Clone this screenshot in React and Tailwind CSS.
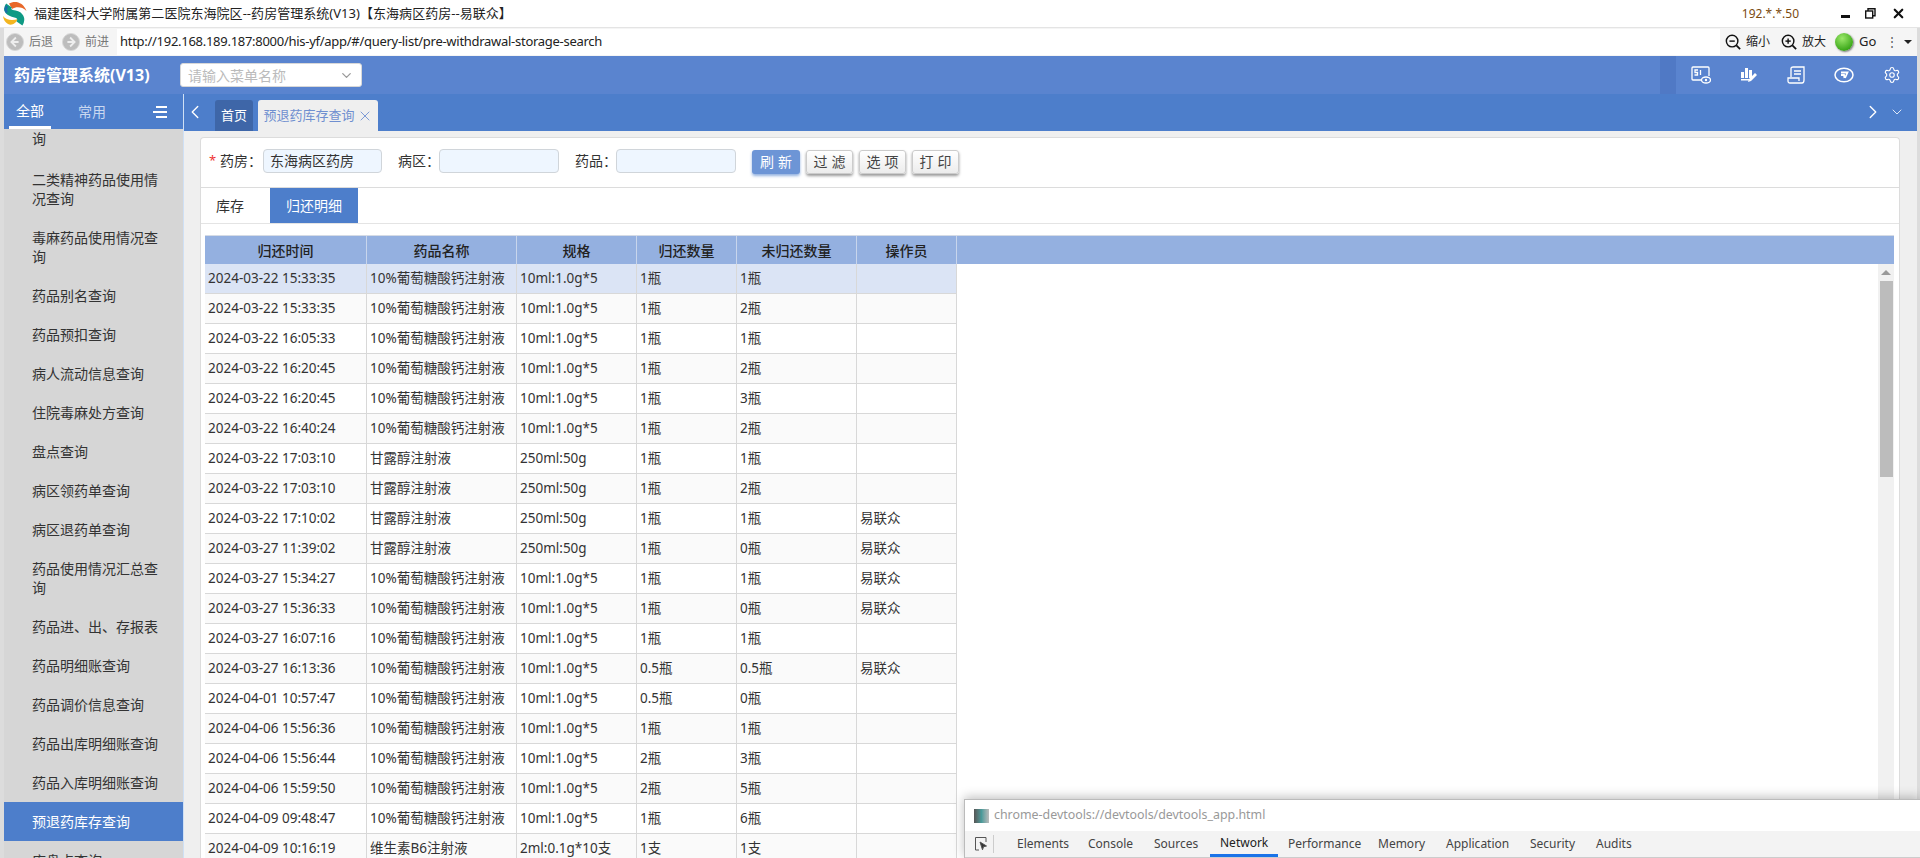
import React from 'react'
import { ChevronDown, ChevronLeft, ChevronRight, X, Settings } from 'lucide-react'

const menu = [
  { lines: ['询'], partial: true },
  { lines: ['二类精神药品使用情', '况查询'] },
  { lines: ['毒麻药品使用情况查', '询'] },
  { lines: ['药品别名查询'] },
  { lines: ['药品预扣查询'] },
  { lines: ['病人流动信息查询'] },
  { lines: ['住院毒麻处方查询'] },
  { lines: ['盘点查询'] },
  { lines: ['病区领药单查询'] },
  { lines: ['病区退药单查询'] },
  { lines: ['药品使用情况汇总查', '询'] },
  { lines: ['药品进、出、存报表'] },
  { lines: ['药品明细账查询'] },
  { lines: ['药品调价信息查询'] },
  { lines: ['药品出库明细账查询'] },
  { lines: ['药品入库明细账查询'] },
  { lines: ['预退药库存查询'], active: true },
  { lines: ['库盘点查询'] },
]

const G = '10%葡萄糖酸钙注射液'
const S = '10ml:1.0g*5'
const M = '甘露醇注射液'
const MS = '250ml:50g'

const rows = [
  ['2024-03-22 15:33:35', G, S, '1瓶', '1瓶', ''],
  ['2024-03-22 15:33:35', G, S, '1瓶', '2瓶', ''],
  ['2024-03-22 16:05:33', G, S, '1瓶', '1瓶', ''],
  ['2024-03-22 16:20:45', G, S, '1瓶', '2瓶', ''],
  ['2024-03-22 16:20:45', G, S, '1瓶', '3瓶', ''],
  ['2024-03-22 16:40:24', G, S, '1瓶', '2瓶', ''],
  ['2024-03-22 17:03:10', M, MS, '1瓶', '1瓶', ''],
  ['2024-03-22 17:03:10', M, MS, '1瓶', '2瓶', ''],
  ['2024-03-22 17:10:02', M, MS, '1瓶', '1瓶', '易联众'],
  ['2024-03-27 11:39:02', M, MS, '1瓶', '0瓶', '易联众'],
  ['2024-03-27 15:34:27', G, S, '1瓶', '1瓶', '易联众'],
  ['2024-03-27 15:36:33', G, S, '1瓶', '0瓶', '易联众'],
  ['2024-03-27 16:07:16', G, S, '1瓶', '1瓶', ''],
  ['2024-03-27 16:13:36', G, S, '0.5瓶', '0.5瓶', '易联众'],
  ['2024-04-01 10:57:47', G, S, '0.5瓶', '0瓶', ''],
  ['2024-04-06 15:56:36', G, S, '1瓶', '1瓶', ''],
  ['2024-04-06 15:56:44', G, S, '2瓶', '3瓶', ''],
  ['2024-04-06 15:59:50', G, S, '2瓶', '5瓶', ''],
  ['2024-04-09 09:48:47', G, S, '1瓶', '6瓶', ''],
  ['2024-04-09 10:16:19', '维生素B6注射液', '2ml:0.1g*10支', '1支', '1支', ''],
]

const heads = ['归还时间', '药品名称', '规格', '归还数量', '未归还数量', '操作员']
const colW = ['w-[162px]', 'w-[150px]', 'w-[120px]', 'w-[100px]', 'w-[120px]', 'w-[100px]']
const devTabs = [
  ['Elements', 'w-[71px]'],
  ['Console', 'w-[66px]'],
  ['Sources', 'w-[66px]'],
  ['Network', 'w-[68px]'],
  ['Performance', 'w-[90px]'],
  ['Memory', 'w-[68px]'],
  ['Application', 'w-[84px]'],
  ['Security', 'w-[66px]'],
  ['Audits', 'w-[60px]'],
]

const Logo = () => (
  <svg width="25" height="25" viewBox="0 0 25 25" fill="none">
    <path d="M7 2.500C12-.5 21 0 24.500 10 20 5.500 14 5.500 10 8z" fill="#e8682a" />
    <path d="M1 15c3 4.500 10 4.500 15 3-2 4-6 7-10 5C3 21.500 1.500 18.500 1 15z" fill="#f3b51f" />
    <path d="M7 4.500C3.500 9.500 7.500 12 13 13c5 1 7.500 5 4.500 9.500" stroke="#0f9a84" strokeWidth="7" />
    <path d="M5 5C3 8 3.500 10 5 11.500" stroke="#1a6fa8" strokeWidth="2.500" />
  </svg>
)

const NavCircle = ({ left }) => (
  <svg width="18" height="18" viewBox="0 0 20 20">
    <circle cx="10" cy="10" r="9.500" fill="#bdbdbd" stroke="#d8d8d8" />
    <path d={left ? 'M11 5 6 10l5 5M6 10h8' : 'M9 5l5 5-5 5M14 10H6'} fill="none" stroke="#eeeeee" strokeWidth="2" />
  </svg>
)

const Magnifier = ({ plus }) => (
  <svg width="16" height="16" viewBox="0 0 18 18" fill="none" stroke="#111" strokeWidth="1.6">
    <circle cx="8" cy="8" r="6.500" />
    <path d="M12.800 12.800 17 17" strokeWidth="2" />
    <path d="M5 8h6" />
    {plus && <path d="M8 5v6" />}
  </svg>
)

const Field = ({ label, value, star, labelW, inputW }) => (
  <div className="flex items-center">
    {star && <span className="w-[11px] text-[13px] text-[#e33]">*</span>}
    <span className={`${labelW} whitespace-nowrap text-[14px] text-[#333]`}>{label}：</span>
    <div className={`${inputW} flex h-[24px] items-center rounded-[4px] border border-[#d0d5da] bg-[#eef6ff] px-[6px] text-[14px] text-[#333]`}>
      {value}
    </div>
  </div>
)

const Btn = ({ children, primary }) => (
  <button
    className={
      primary
        ? 'h-[24px] w-[48px] rounded-[3px] bg-[#6d95d6] pl-[4px] text-[14px] tracking-[4px] text-white shadow-[0_2px_3px_rgba(77,126,203,0.6)]'
        : 'h-[24px] w-[47px] rounded-[3px] border border-[#ccc] bg-gradient-to-b from-white to-[#ececec] pl-[4px] text-[14px] tracking-[4px] text-[#444] shadow-[0_2px_3px_rgba(0,0,0,0.4)]'
    }
  >
    {children}
  </button>
)

export default function App() {
  return (
    <div className="relative flex h-[858px] w-[1920px] flex-col overflow-hidden bg-white font-['Noto_Sans','Noto_Sans_CJK_SC',sans-serif] text-[#333]">
      {/* window title */}
      <div className="flex h-[28px] shrink-0 items-center border-b border-[#e4e4e4] bg-white pl-[2px]">
        <Logo />
        <span className="ml-[7px] text-[13px] tracking-[0.04px] text-[#222]">福建医科大学附属第二医院东海院区--药房管理系统(V13)【东海病区药房--易联众】</span>
        <span className="ml-auto mr-[42px] text-[12px] text-[#7a4a10]">192.*.*.50</span>
        <div className="flex items-center gap-[15px] pr-[14px]">
          <span className="mt-[5px] h-[3px] w-[9px] bg-[#111]" />
          <svg width="11" height="11" viewBox="0 0 11 11" fill="none" stroke="#111" strokeWidth="1.4">
            <rect x="0.7" y="3" width="7" height="7" />
            <path d="M3 3V.8h7v7H8" />
          </svg>
          <X size={15} strokeWidth={3.5} className="text-[#111]" />
        </div>
      </div>

      {/* browser toolbar */}
      <div className="flex h-[28px] shrink-0 items-center border-x-[4px] border-r-[3px] border-[#dcdcdc] bg-[#f5f5f5] text-[12px]">
        <div className="flex w-[113px] items-center pl-[2px] text-[#777]">
          <NavCircle left />
          <span className="ml-[5px]">后退</span>
          <span className="ml-[9px] flex"><NavCircle /></span>
          <span className="ml-[5px]">前进</span>
        </div>
        <div className="flex h-[26px] w-[1603px] items-center bg-white pl-[3px] text-[13px] tracking-[-0.28px] text-[#222]">
          http://192.168.189.187:8000/his-yf/app/#/query-list/pre-withdrawal-storage-search
        </div>
        <div className="flex flex-1 items-center pl-[5px] text-[#222]">
          <Magnifier />
          <span className="ml-[5px]">缩小</span>
          <span className="ml-[11px] flex"><Magnifier plus /></span>
          <span className="ml-[5px]">放大</span>
          <span className="ml-[9px] h-[18px] w-[18px] rounded-full bg-[radial-gradient(circle_at_40%_30%,#9be86a,#3ea91c_70%,#2a7a10)] shadow-[1px_1px_2px_rgba(0,0,0,0.5)]" />
          <span className="ml-[6px] text-[13px]">Go</span>
          <span className="ml-[10px] text-[#555]">⋮</span>
          <span className="ml-[6px] h-0 w-0 border-x-[4px] border-t-[4px] border-x-transparent border-t-[#222]" />
        </div>
      </div>

      {/* app header */}
      <div className="flex h-[38px] shrink-0 items-center border-x-[4px] border-r-[3px] border-[#dcdcdc] bg-[#5a84cf]">
        <span className="ml-[10px] w-[166px] text-[16px] font-bold text-white">药房管理系统(V13)</span>
        <div className="flex h-[24px] w-[182px] items-center justify-between rounded-[3px] border border-[#d8d8d8] bg-white px-[7px] text-[14px] text-[#bbb]">
          请输入菜单名称
          <ChevronDown size={15} className="text-[#999]" />
        </div>
        <div className="ml-auto h-full w-[16px] bg-[#5079c5]" />
        <div className="flex h-full w-[241px] items-center gap-[29px] pl-[15px] text-white">
          <svg width="20" height="18" viewBox="0 0 20 18" fill="none" stroke="white" strokeWidth="1.3">
            <path d="M10 14H2a1 1 0 0 1-1-1V2a1 1 0 0 1 1-1h15a1 1 0 0 1 1 1v8" />
            <path d="M7 4H4v2.500h2.500V9H3.500M9.500 4v5" />
            <ellipse cx="15" cy="14" rx="4.500" ry="3" fill="#5a84cf" />
            <circle cx="15" cy="14" r="1.200" fill="white" stroke="none" />
          </svg>
          <svg width="18" height="18" viewBox="0 0 18 18" fill="white">
            <rect x="1" y="6" width="3" height="6" />
            <rect x="5" y="2" width="3" height="10" />
            <rect x="9" y="4" width="3" height="8" />
            <path d="M1 13h8v1.500H1zM15 7l2 2-6 6-3 1 1-3z" />
          </svg>
          <svg width="18" height="18" viewBox="0 0 18 18" fill="none" stroke="white" strokeWidth="1.3">
            <path d="M4 11V2.500C4 1.500 5 1 6 1h11v13c0 2-1 3-2 3H3c-1.500 0-2-1-2-2v-3h11v3" />
            <path d="M7 5h7M7 8h7" />
          </svg>
          <svg width="20" height="18" viewBox="0 0 20 18" fill="none" stroke="white" strokeWidth="1.5">
            <ellipse cx="10" cy="9" rx="9" ry="6.800" />
            <path d="M7 6.500h6.500L11 12M7 9h3l.5 3" strokeWidth="1.800" />
          </svg>
          <Settings size={18} strokeWidth={1.5} />
        </div>
      </div>

      <div className="flex min-h-0 flex-1 border-x-[4px] border-r-[3px] border-[#dcdcdc]">
        {/* sidebar */}
        <div className="flex w-[180px] shrink-0 flex-col border-r border-[#cfe0f5]">
          <div className="flex h-[35px] shrink-0 bg-[#4d7ecb] text-[14px] text-white">
            <div className="ml-[5px] flex h-full w-[42px] items-center justify-center border-b-[3px] border-white">全部</div>
            <div className="ml-[27px] flex items-center text-[#c9d8f0]">常用</div>
            <div className="ml-[47px] flex flex-col justify-center gap-[3px]">
              <span className="ml-[3px] h-[2px] w-[11px] bg-white" />
              <span className="h-[2px] w-[14px] bg-white" />
              <span className="ml-[3px] h-[2px] w-[11px] bg-white" />
            </div>
          </div>
          <div className="flex-1 overflow-hidden bg-[#d6d6d6] text-[14px] leading-[19px] text-[#333]">
            {menu.map((m, i) => (
              <div
                key={i}
                className={
                  m.partial
                    ? 'flex h-[31px] items-start pl-[28px]'
                    : m.active
                      ? 'flex h-[39px] flex-col justify-center bg-[#4d7ecb] pl-[28px] text-white'
                      : 'flex flex-col justify-center py-[10px] pl-[28px]'
                }
              >
                {m.lines.map((l) => (
                  <div key={l}>{l}</div>
                ))}
              </div>
            ))}
          </div>
        </div>

        {/* main */}
        <div className="flex min-w-0 flex-1 flex-col bg-[#efefef]">
          <div className="flex h-[37px] shrink-0 items-end bg-[#4d7ecb]">
            <ChevronLeft size={22} strokeWidth={1.5} className="mb-[8px] text-white" />
            <div className="ml-[9px] flex h-[31px] w-[38px] items-center justify-center rounded-t-[3px] bg-[#3e66a8] text-[13px] text-white">首页</div>
            <div className="ml-[5px] flex h-[31px] w-[120px] items-center justify-center gap-[2px] rounded-t-[3px] bg-[#efefef] text-[13px] text-[#6f8fd0]">
              预退药库存查询
              <X size={16} strokeWidth={1.5} className="text-[#7e9bd6]" />
            </div>
            <ChevronRight size={22} strokeWidth={1.5} className="mb-[8px] ml-auto text-white" />
            <ChevronDown size={16} strokeWidth={1.5} className="mb-[11px] ml-[5px] mr-[12px] text-[#dfe8f7]" />
          </div>

          <div className="ml-[16px] mr-[17px] mt-[6px] flex min-h-0 flex-1 flex-col rounded-t-[4px] border-x border-t border-[#dcdcdc] bg-white">
            {/* filters */}
            <div className="flex h-[50px] shrink-0 items-center border-b border-[#dcdcdc] pb-[4px] pl-[8px]">
              <Field star label="药房" value="东海病区药房" labelW="w-[43px]" inputW="w-[119px]" />
              <div className="ml-[16px]"><Field label="病区" labelW="w-[41px]" inputW="w-[120px]" /></div>
              <div className="ml-[16px]"><Field label="药品" labelW="w-[41px]" inputW="w-[120px]" /></div>
              <div className="ml-[16px] mt-[2px] flex gap-[6px]">
                <Btn primary>刷新</Btn>
                <Btn>过滤</Btn>
                <Btn>选项</Btn>
                <Btn>打印</Btn>
              </div>
            </div>

            {/* tabs */}
            <div className="flex h-[36px] shrink-0 border-b border-[#e4e4e4] text-[14px]">
              <div className="flex w-[69px] items-center pl-[15px] text-[#333]">库存</div>
              <div className="flex w-[88px] items-center justify-center bg-[#4d7ecb] text-white">归还明细</div>
            </div>

            {/* table */}
            <div className="ml-[4px] mr-[5px] mt-[11px] flex min-h-0 flex-1 flex-col">
              <div className="flex h-[29px] shrink-0 border-t border-[#d5dbe5] bg-[#94b0e0] text-[14px] font-medium text-[#222]">
                {heads.map((h, i) => (
                  <div key={h} className={`${colW[i]} flex items-center justify-center border-r border-[#c8d5ec]`}>{h}</div>
                ))}
              </div>
              <div className="flex min-h-0 flex-1">
                <div className="w-[752px] shrink-0">
                  {rows.map((r, i) => (
                    <div
                      key={i}
                      className={
                        i === 0
                          ? 'flex h-[30px] border-b border-[#d8d8d8] bg-[#dbe4f5]'
                          : i % 2
                            ? 'flex h-[30px] border-b border-[#d8d8d8] bg-[#fafafa]'
                            : 'flex h-[30px] border-b border-[#d8d8d8] bg-white'
                      }
                    >
                      {r.map((c, j) => (
                        <div
                          key={j}
                          className={`${colW[j]} flex items-center overflow-hidden whitespace-nowrap border-r border-[#d8d8d8] pl-[3px] text-[13.5px] text-[#333]`}
                        >
                          {c}
                        </div>
                      ))}
                    </div>
                  ))}
                </div>
                <div className="ml-auto flex w-[16px] flex-col items-center bg-[#f1f1f1] pt-[6px]">
                  <span className="h-0 w-0 border-x-[5px] border-b-[5px] border-x-transparent border-b-[#999]" />
                  <span className="mt-[6px] h-[196px] w-[13px] bg-[#bcbcbc]" />
                </div>
              </div>
            </div>
          </div>
        </div>
      </div>

      {/* devtools window floating over the page */}
      <div className="absolute bottom-0 left-[964px] right-0 h-[59px] border-l border-t border-[#bbb] bg-white shadow-[0_-2px_10px_rgba(0,0,0,0.25)]">
        <div className="flex h-[31px] items-center pl-[9px] text-[12.4px] text-[#999]">
          <span className="mr-[5px] h-[14px] w-[15px] bg-gradient-to-r from-[#555] via-[#4a9a9a] to-[#bbb]" />
          chrome-devtools://devtools/devtools_app.html
        </div>
        <div className="flex h-[27px] items-stretch border-b border-[#ccc] bg-[#f3f3f3] text-[12px] text-[#444]">
          <div className="flex w-[35px] items-center border-r-0 pl-[9px]">
            <svg width="14" height="16" viewBox="0 0 14 16" fill="none" stroke="#555">
              <path d="M5 14H1.500V1.500H12V6" />
              <path d="M6 6l6.500 4-3 .8-1 3z" fill="#333" />
            </svg>
            <span className="ml-[5px] h-[18px] w-px bg-[#ccc]" />
          </div>
          <div className="ml-[7px] flex">
            {devTabs.map(([t, w]) => (
              <div
                key={t}
                className={`${w} flex items-center pl-[10px] ${t === 'Network' ? 'border-b-[3px] border-[#1a73e8] text-[#222]' : ''}`}
              >
                {t}
              </div>
            ))}
          </div>
        </div>
      </div>
    </div>
  )
}
